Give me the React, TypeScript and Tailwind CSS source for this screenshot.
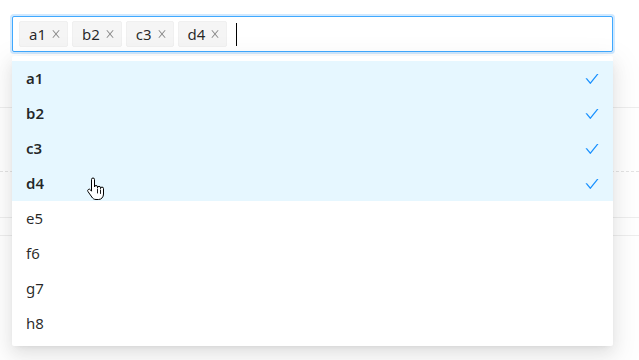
import { useState } from 'react';

const options = ['a1', 'b2', 'c3', 'd4', 'e5', 'f6', 'g7', 'h8'];

function CloseIcon() {
  return (
    <svg viewBox="64 64 896 896" className="w-[10px] h-[10px]" fill="currentColor">
      <path d="M563.8 512l262.5-312.9c4.4-5.2.7-13.1-6.1-13.1h-79.8c-4.7 0-9.2 2.1-12.3 5.7L511.6 449.8 295.1 191.7c-3-3.6-7.5-5.7-12.3-5.7H203c-6.8 0-10.5 7.9-6.1 13.1L459.4 512 196.9 824.9A7.95 7.95 0 00203 838h79.8c4.7 0 9.2-2.1 12.3-5.7l216.5-258.1 216.5 258.1c3 3.6 7.5 5.7 12.3 5.7h79.8c6.8 0 10.5-7.9 6.1-13.1L563.8 512z" />
    </svg>
  );
}

function CheckIcon() {
  return (
    <svg viewBox="64 64 896 896" className="w-[14px] h-[14px]" fill="currentColor">
      <path d="M912 190h-69.9c-9.8 0-19.1 4.5-25.1 12.2L404.7 724.5 207 474a32 32 0 00-25.1-12.2H112c-6.7 0-10.4 7.7-6.3 12.9l273.9 347c12.8 16.2 37.4 16.2 50.3 0l488.4-618.9c4.1-5.1.4-12.8-6.3-12.8z" />
    </svg>
  );
}

function HandCursor() {
  return (
    <svg viewBox="0 0 20 24" className="w-[20px] h-[24px]">
      <path
        d="M5.5 2.5a1.5 1.5 0 0 1 3 0V10a1.5 1.5 0 0 1 3 0v.8a1.5 1.5 0 0 1 3 0v.8a1.5 1.5 0 0 1 3 0V17c0 3-2 5.5-5 5.5H10c-2 0-3.2-1-4.2-2.5L2 14.6a1.5 1.5 0 0 1 2.4-1.8l1.1 1.4Z"
        fill="#fff"
        stroke="#000"
        strokeWidth="1"
        strokeLinejoin="round"
      />
      <path d="M11.5 12v4M14.5 13v3.5" stroke="#000" strokeWidth="0.9" strokeLinecap="round" />
    </svg>
  );
}

export default function App() {
  const [selected] = useState<string[]>(['a1', 'b2', 'c3', 'd4']);

  return (
    <div className="relative w-[639px] h-[360px] bg-white overflow-hidden text-[15px] text-black/85" style={{ fontFamily: '"Noto Sans", "Open Sans", sans-serif' }}>
      <div className="pt-4 px-3">
        {/* Select box */}
        <div className="h-[36px] w-[601px] border border-[#40a9ff] rounded-[2px] shadow-[0_0_0_2px_rgba(24,144,255,0.2)] flex items-center pl-[6px] gap-[4px] bg-white">
          {selected.map(s => (
            <span key={s} className="h-[26px] flex items-center gap-[5px] pl-[9px] pr-[6px] bg-[#f5f5f5] border border-[#f0f0f0] rounded-[2px] leading-none">
              <span className="text-black/85">{s}</span>
              <span className="text-black/45"><CloseIcon /></span>
            </span>
          ))}
          <span className="ml-[5px] w-px h-[23px] bg-black" />
        </div>
      </div>

      {/* Background table rows behind dropdown */}
      <div className="mt-[55px] border-t border-[#eeeeee]" />
      <div className="mt-[63px] border-t border-dashed border-[#e4e4e4]" />
      <div className="mt-[45px] border-t border-[#eeeeee]" />
      <div className="mt-[17px] border-t border-[#eeeeee]" />

      {/* Dropdown */}
      <div className="absolute left-[12px] top-[56px] w-[601px] bg-white rounded-[2px] py-[5px] shadow-[0_3px_6px_-4px_rgba(0,0,0,0.12),0_6px_16px_0_rgba(0,0,0,0.08),0_9px_28px_8px_rgba(0,0,0,0.05)]">
        {options.map(o => {
          const on = selected.includes(o);
          return (
            <div
              key={o}
              className={`h-[35px] flex items-center justify-between pl-[14px] pr-[14px] ${on ? 'bg-[#e6f7ff] font-semibold' : ''}`}
            >
              <span>{o}</span>
              {on && <span className="text-[#1890ff]"><CheckIcon /></span>}
            </div>
          );
        })}
      </div>

      <div className="absolute left-[86px] top-[177px]">
        <HandCursor />
      </div>
    </div>
  );
}
